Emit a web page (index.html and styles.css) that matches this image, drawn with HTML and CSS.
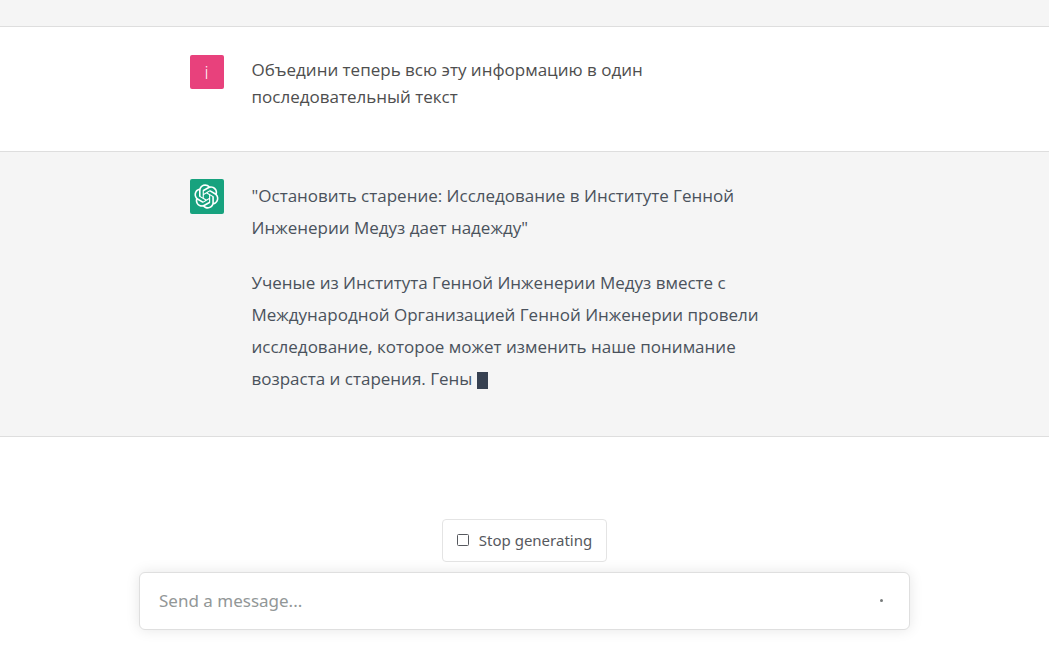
FILE: index.html
```html
<!DOCTYPE html>
<html lang="ru">
<head>
<meta charset="utf-8">
<meta name="viewport" content="width=device-width, initial-scale=1">
<title>Chat</title>
<link rel="stylesheet" href="styles.css">
</head>
<body>
<main class="chat">
  <div class="thread">
    <div class="previous"></div>
    <article class="message message-user">
      <div class="row">
        <div class="avatar avatar-user">i</div>
        <p class="text">Объедини теперь всю эту информацию в один последовательный текст</p>
      </div>
    </article>
    <article class="message message-bot">
      <div class="row">
        <div class="avatar avatar-bot">
          <svg class="logo" viewBox="0 0 41 41" fill="none" aria-hidden="true"><path d="M37.5324 16.8707C37.9808 15.5241 38.1363 14.0974 37.9886 12.6859C37.8409 11.2744 37.3934 9.91076 36.676 8.68622C35.6126 6.83404 33.9882 5.3676 32.0373 4.4985C30.0864 3.62941 27.9098 3.40259 25.8215 3.85078C24.8796 2.7893 23.7219 1.94125 22.4257 1.36341C21.1295 0.785575 19.7249 0.491269 18.3058 0.500197C16.1708 0.495044 14.0893 1.16803 12.3614 2.42214C10.6335 3.67624 9.34853 5.44666 8.6917 7.47815C7.30085 7.76286 5.98686 8.3414 4.8377 9.17505C3.68854 10.0087 2.73073 11.0782 2.02839 12.312C0.956464 14.1591 0.498905 16.2988 0.721698 18.4228C0.944492 20.5467 1.83612 22.5449 3.268 24.1293C2.81966 25.4759 2.66413 26.9026 2.81182 28.3141C2.95951 29.7256 3.40701 31.0892 4.12437 32.3138C5.18791 34.1659 6.8123 35.6322 8.76321 36.5013C10.7141 37.3704 12.8907 37.5973 14.9789 37.1492C15.9208 38.2107 17.0786 39.0587 18.3747 39.6366C19.6709 40.2144 21.0755 40.5087 22.4946 40.4998C24.6307 40.5054 26.7133 39.8321 28.4418 38.5772C30.1704 37.3223 31.4556 35.5506 32.1119 33.5179C33.5027 33.2332 34.8167 32.6547 35.9659 31.821C37.115 30.9874 38.0728 29.9178 38.7752 28.684C39.8458 26.8371 40.3023 24.6979 40.0789 22.5748C39.8556 20.4517 38.9639 18.4544 37.5324 16.8707ZM22.4978 37.8849C20.7443 37.8874 19.0459 37.2733 17.6994 36.1501C17.7601 36.117 17.8666 36.0586 17.936 36.0161L25.9004 31.4156C26.1003 31.3019 26.2663 31.137 26.3813 30.9378C26.4964 30.7386 26.5563 30.5124 26.5549 30.2825V19.0542L29.9213 20.998C29.9389 21.0068 29.9541 21.0198 29.9656 21.0359C29.977 21.052 29.9842 21.0707 29.9867 21.0902V30.3889C29.9842 32.375 29.1946 34.2791 27.7909 35.6841C26.3872 37.0892 24.4838 37.8806 22.4978 37.8849ZM6.39227 31.0064C5.51397 29.4888 5.19742 27.7107 5.49804 25.9832C5.55718 26.0187 5.66048 26.0818 5.73461 26.1244L13.699 30.7248C13.8975 30.8408 14.1233 30.902 14.3532 30.902C14.583 30.902 14.8088 30.8408 15.0073 30.7248L24.731 25.1103V28.9979C24.7321 29.0177 24.7283 29.0376 24.7199 29.0556C24.7115 29.0736 24.6988 29.0893 24.6829 29.1012L16.6317 33.7497C14.9096 34.7416 12.8643 35.0097 10.9447 34.4954C9.02506 33.9811 7.38785 32.7263 6.39227 31.0064ZM4.29707 13.6194C5.17156 12.0998 6.55279 10.9364 8.19885 10.3327C8.19885 10.4013 8.19491 10.5228 8.19491 10.6071V19.808C8.19351 20.0378 8.25334 20.2638 8.36823 20.4629C8.48312 20.6619 8.64893 20.8267 8.84863 20.9404L18.5723 26.5542L15.206 28.4979C15.1894 28.5089 15.1703 28.5155 15.1505 28.5173C15.1307 28.5191 15.1107 28.516 15.0924 28.5082L7.04046 23.8557C5.32135 22.8601 4.06716 21.2235 3.55289 19.3046C3.03862 17.3858 3.30624 15.3413 4.29707 13.6194ZM31.955 20.0556L22.2312 14.4411L25.5976 12.4981C25.6142 12.4872 25.6333 12.4805 25.6531 12.4787C25.6729 12.4769 25.6928 12.4801 25.7111 12.4879L33.7631 17.1364C34.9967 17.849 36.0017 18.8982 36.6606 20.1613C37.3194 21.4244 37.6047 22.849 37.4832 24.2684C37.3617 25.6878 36.8382 27.0432 35.9743 28.1759C35.1103 29.3086 33.9415 30.1717 32.6047 30.6641C32.6047 30.5947 32.6047 30.4733 32.6047 30.3889V21.188C32.6066 20.9586 32.5474 20.7328 32.4332 20.5338C32.319 20.3348 32.154 20.1698 31.955 20.0556ZM35.3055 15.0128C35.2464 14.9765 35.1431 14.9142 35.069 14.8717L27.1045 10.2712C26.906 10.1554 26.6803 10.0943 26.4504 10.0943C26.2206 10.0943 25.9948 10.1554 25.7963 10.2712L16.0726 15.8858V11.9982C16.0715 11.9783 16.0753 11.9585 16.0837 11.9405C16.0921 11.9225 16.1048 11.9068 16.1207 11.8949L24.1719 7.25025C25.4053 6.53903 26.8158 6.19376 28.2383 6.25482C29.6608 6.31589 31.0364 6.78077 32.2044 7.59508C33.3723 8.40939 34.2842 9.53945 34.8334 10.8531C35.3826 12.1667 35.5464 13.6095 35.3055 15.0128ZM14.2424 21.9419L10.8752 19.9981C10.8576 19.9893 10.8423 19.9763 10.8309 19.9602C10.8195 19.9441 10.8122 19.9254 10.8098 19.9058V10.6071C10.8107 9.18295 11.2173 7.78848 11.9819 6.58696C12.7466 5.38544 13.8377 4.42659 15.1275 3.82264C16.4173 3.21869 17.8524 2.99464 19.2649 3.1767C20.6775 3.35876 22.0089 3.93941 23.1034 4.85067C23.0427 4.88379 22.937 4.94215 22.8668 4.98473L14.9024 9.58517C14.7025 9.69878 14.5366 9.86356 14.4215 10.0626C14.3065 10.2616 14.2466 10.4877 14.2479 10.7175L14.2424 21.9419ZM16.071 17.9991L20.4018 15.4978L24.7325 17.9975V22.9985L20.4018 25.4983L16.071 22.9985V17.9991Z" fill="currentColor"/></svg>
        </div>
        <div class="text prose">
          <p>"Остановить старение: Исследование в Институте Генной Инженерии Медуз дает надежду"</p>
          <p>Ученые из Института Генной Инженерии Медуз вместе с Международной Организацией Генной Инженерии провели исследование, которое может изменить наше понимание возраста и старения. Гены <span class="cursor"></span></p>
        </div>
      </div>
    </article>
  </div>
  <form class="composer">
    <button class="stop" type="button">
      <svg class="stop-icon" viewBox="0 0 12 12" fill="none" stroke="currentColor" aria-hidden="true"><rect x="0.5" y="0.5" width="11" height="11" rx="1"/></svg>
      Stop generating
    </button>
    <div class="field">
      <input class="input" type="text" placeholder="Send a message..." aria-label="Send a message">
      <button class="pending" type="button" aria-label="Generating"><span class="dot"></span></button>
    </div>
  </form>
</main>
</body>
</html>
```
FILE: styles.css
```css
* {
  box-sizing: border-box;
}

body {
  margin: 0;
  background: #fff;
  color: #4a525c;
  font-family: "Open Sans", "Noto Sans", sans-serif;
  font-size: 17px;
}

p {
  margin: 0;
}

.chat {
  display: flex;
  flex-direction: column;
  min-height: 100vh;
}

.thread {
  flex: 1;
}

.previous {
  height: 27px;
  background: #f5f5f5;
  border-bottom: 1px solid #dedede;
}

.message {
  padding: 28px 24px;
  border-bottom: 1px solid #dedede;
}

.message-user {
  min-height: 125px;
  color: #4e4e4e;
}

.message-bot {
  padding-top: 27px;
  padding-bottom: 41px;
  background: #f5f5f5;
}

.row {
  display: flex;
  gap: 28px;
  max-width: 670px;
  margin: 0 auto;
}

.avatar {
  display: flex;
  flex: none;
  align-items: center;
  justify-content: center;
  width: 34px;
  height: 34px;
  border-radius: 2px;
  color: #fff;
}

.avatar-user {
  background: #e8417c;
  font-size: 18px;
  font-weight: 300;
}

.avatar-bot {
  height: 35px;
  background: #17a27e;
}

.logo {
  width: 25px;
  height: 25px;
}

.text {
  flex: 1;
  max-width: 530px;
  line-height: 27px;
}

.message-user .text {
  max-width: 440px;
  padding-top: 1px;
}

.prose {
  display: grid;
  gap: 23px;
  padding-top: 1px;
  line-height: 32px;
}

.cursor {
  display: inline-block;
  width: 11px;
  height: 17px;
  background: #374151;
  vertical-align: -4px;
}

.composer {
  display: flex;
  flex-direction: column;
  align-items: center;
  gap: 10px;
  width: 100%;
  max-width: 819px;
  margin: 0 auto;
  padding: 0 24px 20px;
  font-family: "Noto Sans", "Open Sans", sans-serif;
}

.stop {
  display: flex;
  align-items: center;
  gap: 10px;
  height: 43px;
  padding: 0 14px 1px;
  border: 1px solid #e4e4e4;
  border-radius: 4px;
  background: #fff;
  color: #56595e;
  font: inherit;
  font-size: 15px;
}

.stop-icon {
  width: 12px;
  height: 12px;
}

.field {
  display: flex;
  align-items: center;
  width: 100%;
  height: 58px;
  padding: 0 20px 1px 19px;
  border: 1px solid #dfdfdf;
  border-radius: 6px;
  background: #fff;
  box-shadow: 0 0 14px rgba(0, 0, 0, 0.1);
}

.input {
  flex: 1;
  min-width: 0;
  padding: 0;
  border: 0;
  outline: 0;
  background: transparent;
  color: inherit;
  font: inherit;
}

.input::placeholder {
  color: #929797;
  opacity: 1;
}

.pending {
  display: flex;
  align-items: center;
  justify-content: center;
  width: 16px;
  height: 16px;
  padding: 0;
  border: 0;
  background: transparent;
}

.dot {
  width: 3px;
  height: 3px;
  border-radius: 50%;
  background: #777b7b;
}
```
